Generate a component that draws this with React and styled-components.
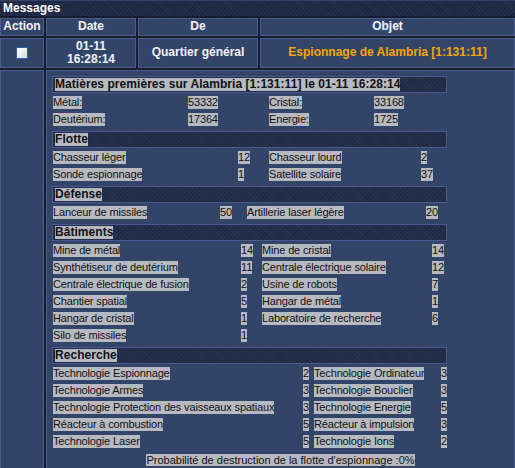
import React from "react";
import styled, { createGlobalStyle } from "styled-components";

const Global = createGlobalStyle`
  html, body { margin: 0; padding: 0; overflow: hidden; background: #131a2d; }
  body { font-family: "Liberation Sans", Arial, sans-serif; }
`;

const dither = `
  background-color: #1f2945;
  background-image:
    repeating-linear-gradient(45deg, rgba(255,255,255,0.035) 0 1px, transparent 1px 3px),
    repeating-linear-gradient(-45deg, rgba(0,0,0,0.08) 0 1px, transparent 1px 3px);
`;

const Page = styled.div`
  width: 515px;
  ${dither}
  background-color: #141b2f;
`;

const TitleBar = styled.div`
  height: 16px;
  ${dither}
  border-top: 1px solid #34426a;
  box-sizing: border-box;
  color: #ffffff;
  font-weight: bold;
  font-size: 12px;
  line-height: 15px;
  padding-left: 3px;
  margin-bottom: 2px;
`;

const Table = styled.div`
  display: grid;
  grid-template-columns: 44px 90px 120px 1fr;
  grid-template-rows: 18px 30px auto;
  gap: 2px;
`;

const Cell = styled.div`
  background: #334469;
  border: 1px solid #4b5c8d;
  box-sizing: border-box;
  display: flex;
  align-items: center;
  justify-content: center;
  text-align: center;
  color: ${(p) => (p.$accent ? "#f6a400" : "#f2f4fa")};
  font-weight: bold;
  font-size: 12px;
  line-height: 13.5px;
`;

const Check = styled.span`
  width: 12px;
  height: 12px;
  box-sizing: border-box;
  border: 1px solid #2a64a8;
  background: linear-gradient(135deg, #ffffff 0%, #eceef2 50%, #d6d8de 100%);
`;

const SideCell = styled.div`
  background: #334469;
  border: 1px solid #4b5c8d;
  box-sizing: border-box;
  grid-column: 1;
`;

const Content = styled.div`
  grid-column: 2 / -1;
  background: #334469;
  border: 1px solid #4b5c8d;
  box-sizing: border-box;
  padding: 5px 5px 12px 5px;
  display: flex;
  flex-direction: column;
  gap: 3px;
`;

const Section = styled.section`
  width: 395px;
  display: flex;
  flex-direction: column;
  gap: 1px;
`;

const SectionHead = styled.div`
  height: 17px;
  box-sizing: border-box;
  border: 1px solid #4a5a8e;
  ${dither}
  background-color: #222c48;
  padding-left: 2px;
  display: flex;
  align-items: center;
`;

const Hl = styled.span`
  background: #b7b9c1;
  color: #111111;
  font-size: ${(p) => (p.$bold ? "12px" : "11px")};
  font-weight: ${(p) => (p.$bold ? "bold" : "normal")};
  letter-spacing: ${(p) => (p.$bold ? "0.05px" : p.$wide ? "0px" : "-0.15px")};
  line-height: 13px;
  white-space: nowrap;
`;

const Rows = styled.div`
  display: grid;
  grid-template-columns: ${(p) => p.$cols};
  grid-auto-rows: 17px;
  padding-left: 1px;
  align-items: center;
`;

const Item = styled(Hl)`
  justify-self: start;
`;

const Footer = styled.div`
  text-align: center;
  line-height: 17px;
  height: 17px;
  margin-top: -3px;
`;

const sections = [
  {
    title: "Matières premières sur Alambria [1:131:11] le 01-11 16:28:14",
    cols: "135px 81px 105px 1fr",
    rows: [
      ["Métal:", "53332", "Cristal:", "33168"],
      ["Deutérium:", "17364", "Energie:", "1725"],
    ],
  },
  {
    title: "Flotte",
    cols: "185px 31px 152px 1fr",
    rows: [
      ["Chasseur léger", "12", "Chasseur lourd", "2"],
      ["Sonde espionnage", "1", "Satellite solaire", "37"],
    ],
  },
  {
    title: "Défense",
    cols: "167px 27px 179px 1fr",
    rows: [["Lanceur de missiles", "50", "Artillerie laser légère", "20"]],
  },
  {
    title: "Bâtiments",
    cols: "188px 21px 170px 1fr",
    rows: [
      ["Mine de métal", "14", "Mine de cristal", "14"],
      ["Synthétiseur de deutérium", "11", "Centrale électrique solaire", "12"],
      ["Centrale électrique de fusion", "2", "Usine de robots", "7"],
      ["Chantier spatial", "5", "Hangar de métal", "1"],
      ["Hangar de cristal", "1", "Laboratoire de recherche", "6"],
      ["Silo de missiles", "1"],
    ],
  },
  {
    title: "Recherche",
    cols: "250px 11px 127px 1fr",
    rows: [
      ["Technologie Espionnage", "2", "Technologie Ordinateur", "3"],
      ["Technologie Armes", "3", "Technologie Bouclier", "3"],
      ["Technologie Protection des vaisseaux spatiaux", "3", "Technologie Energie", "5"],
      ["Réacteur à combustion", "5", "Réacteur à impulsion", "3"],
      ["Technologie Laser", "5", "Technologie Ions", "2"],
    ],
  },
];

export default function App() {
  return (
    <Page>
      <Global />
      <TitleBar>Messages</TitleBar>
      <Table>
        <Cell>Action</Cell>
        <Cell>Date</Cell>
        <Cell>De</Cell>
        <Cell>Objet</Cell>
        <Cell>
          <Check />
        </Cell>
        <Cell>
          01-11
          <br />
          16:28:14
        </Cell>
        <Cell>Quartier général</Cell>
        <Cell $accent>Espionnage de Alambria [1:131:11]</Cell>
        <SideCell />
        <Content>
          {sections.map((s) => (
            <Section key={s.title}>
              <SectionHead>
                <Hl $bold>{s.title}</Hl>
              </SectionHead>
              <Rows $cols={s.cols}>
                {s.rows.map((r, i) =>
                  r.map((t, j) => <Item key={i + "-" + j}>{t}</Item>)
                )}
              </Rows>
            </Section>
          ))}
          <Footer>
            <Hl $wide>Probabilité de destruction de la flotte d'espionnage :0%</Hl>
          </Footer>
        </Content>
      </Table>
    </Page>
  );
}
